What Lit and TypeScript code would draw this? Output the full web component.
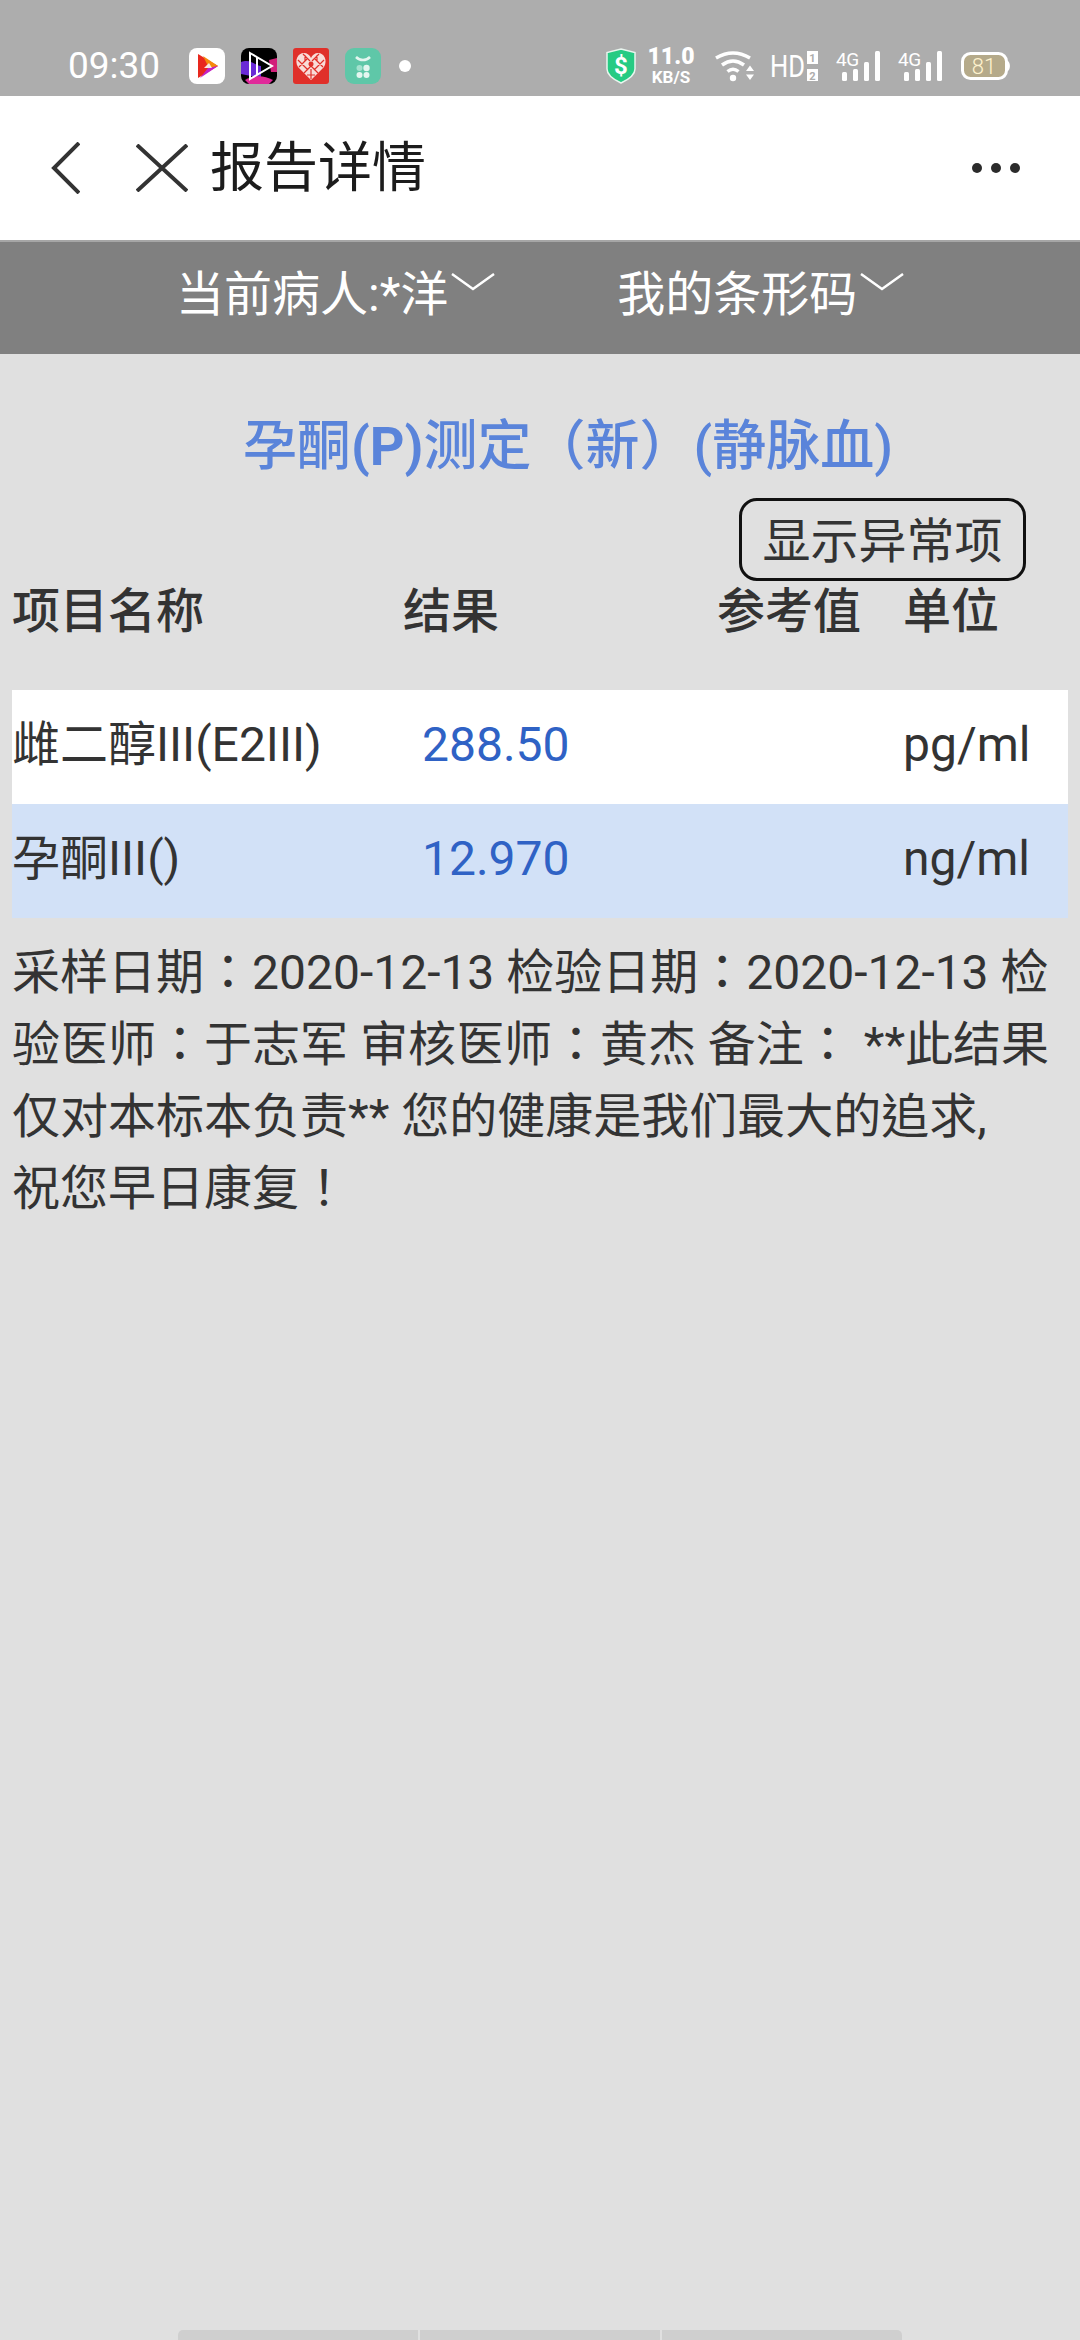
import { LitElement, html, css } from 'lit';
import { customElement } from 'lit/decorators.js';

const rows = [
  { name: '雌二醇III(E2III)', value: '288.50', unit: 'pg/ml', tint: false },
  { name: '孕酮III()', value: '12.970', unit: 'ng/ml', tint: true },
];

@customElement('app-root')
export class AppRoot extends LitElement {
  static styles = css`
    :host {
      display: block;
      width: 1080px;
      height: 2340px;
      overflow: hidden;
      position: relative;
      background: #e0e0e0;
      color: #333;
      font-family: 'Roboto', 'Noto Sans CJK SC', sans-serif;
    }
    svg {
      display: block;
      flex: none;
    }

    /* status bar */
    .status {
      height: 96px;
      background: #adadad;
      color: #fff;
      display: flex;
      align-items: center;
      padding: 36px 0 0 68px;
      box-sizing: border-box;
    }
    .time {
      font-size: 37px;
      width: 115px;
      margin-top: -1px;
    }
    .apps {
      display: flex;
      gap: 16px;
      margin-left: 6px;
      align-items: center;
    }
    .dot {
      width: 12px;
      height: 12px;
      border-radius: 50%;
      background: #fff;
      margin-left: 2px;
    }
    .sys {
      margin-left: auto;
      margin-right: 69px;
      display: flex;
      align-items: center;
    }
    .speed {
      display: flex;
      flex-direction: column;
      align-items: center;
      font-weight: 700;
      margin: 2px 21px 0 12px;
      width: 46px;
    }
    .speed b {
      font-size: 23px;
      line-height: 20px;
    }
    .speed span {
      font-size: 17px;
      line-height: 20px;
    }
    .wifi {
      margin-right: 16px;
    }
    .hd {
      margin-right: 18px;
    }
    .sig {
      width: 44px;
      height: 30px;
      margin-right: 18px;
      display: flex;
      align-items: flex-end;
    }
    .sig-left {
      width: 22px;
      display: flex;
      flex-direction: column;
    }
    .sig-left span {
      font-size: 19px;
      line-height: 18px;
      height: 18px;
      letter-spacing: -0.5px;
      white-space: nowrap;
    }
    .sig-bars {
      display: flex;
      align-items: flex-end;
      gap: 6px;
      padding-left: 6px;
      height: 12px;
    }
    .sig i {
      display: block;
      width: 5px;
      background: #fff;
      border-radius: 1.5px;
    }
    .sig > i {
      margin-left: 6px;
    }
    .battery {
      margin-left: 1px;
    }

    /* nav */
    .nav {
      height: 144px;
      box-sizing: border-box;
      background: #fff;
      display: flex;
      align-items: center;
      padding-left: 51px;
      color: #1c1c1c;
    }
    .close {
      margin-left: 56px;
    }
    .nav h1 {
      margin: 2px 0 0 22px;
      font-size: 54px;
      font-weight: 400;
      line-height: 60px;
    }
    .more {
      margin-left: auto;
      margin-right: 60px;
      display: flex;
      gap: 9px;
    }
    .more i {
      width: 10px;
      height: 10px;
      background: #2b2b2b;
      border-radius: 50%;
    }

    /* patient bar */
    .bar {
      height: 114px;
      box-sizing: border-box;
      background: #808080;
      border-top: 2px solid #a6a6a6;
      color: #fff;
      font-size: 48px;
      display: flex;
      padding: 22px 0 0 176px;
    }
    .pick {
      display: flex;
      align-items: flex-start;
      line-height: 62px;
    }
    .pick + .pick {
      margin-left: 122px;
    }
    .pick svg {
      margin: 9px 0 0 3px;
    }

    /* report */
    .title {
      margin: 0;
      padding: 60px 0 2px 56px;
      text-align: center;
      font-size: 54px;
      line-height: 66px;
      font-weight: 500;
      color: #5a84da;
    }
    .tools {
      display: flex;
      justify-content: flex-end;
      padding: 16px 54px 0 0;
    }
    .toggle {
      box-sizing: border-box;
      width: 287px;
      height: 83px;
      border: 3px solid #111;
      border-radius: 18px;
      background: none;
      color: #333;
      font: inherit;
      font-size: 48px;
      padding: 0 0 5px;
    }
    .table {
      margin: 0 12px;
    }
    .head {
      display: grid;
      grid-template-columns: 391px 314px 186px 1fr;
      height: 109px;
      font-size: 48px;
      font-weight: 500;
      line-height: 62px;
    }
    .row {
      display: grid;
      grid-template-columns: 410px 481px 1fr;
      align-items: center;
      box-sizing: border-box;
      height: 114px;
      padding-bottom: 5px;
      font-size: 48px;
      line-height: 60px;
      background: #fff;
    }
    .row.tint {
      background: #d2e1f7;
    }
    .row .val {
      color: #2f62c5;
    }
    .note {
      margin: 19px 12px 0;
      font-family: 'Roboto', 'Noto Sans CJK TC', sans-serif;
      font-size: 48px;
      line-height: 72px;
    }

    /* gesture handle */
    .handle {
      position: absolute;
      left: 178px;
      bottom: 0;
      width: 724px;
      height: 10px;
      display: flex;
      gap: 2px;
    }
    .handle i {
      flex: 1;
      background: #cfcfcf;
    }
    .handle i:first-child {
      border-radius: 5px 0 0 0;
    }
    .handle i:last-child {
      border-radius: 0 5px 0 0;
    }
  `;

  private renderApps() {
    return html`
      <div class="apps">
        <svg width="36" height="36" viewBox="0 0 36 36">
          <rect width="36" height="36" rx="8" fill="#fff" />
          <path d="M9 6 L29 18 L9 30 Z" fill="#e8281e" />
          <path d="M14 8 L29 18 L20 20 Z" fill="#f58a0c" />
          <path d="M11 30 L29 18 L19 20 Z" fill="#c222c8" />
          <path d="M15 20 L20 15 L23 20 Z" fill="#f8e8e0" />
        </svg>
        <svg width="36" height="36" viewBox="0 0 36 36">
          <rect width="36" height="36" rx="8" fill="#000" />
          <path d="M0 14 C10 10 14 18 20 18 L20 30 L0 26 Z" fill="#6a2ad6" />
          <path d="M4 32 C14 26 24 28 32 32 L28 36 L8 36 Z" fill="#e02a9a" />
          <path d="M28 12 L36 10 L36 24 L30 24 Z" fill="#d2207a" />
          <path d="M9 5 L31 18 L9 31 Z M16 9 V27 M9 5 L16 9 M9 31 L16 27" fill="none" stroke="#fff" stroke-width="2" />
        </svg>
        <svg width="36" height="36" viewBox="0 0 36 36">
          <rect width="36" height="36" rx="3" fill="#e0302a" />
          <path d="M18 32 L5 19 C1 12 5 5 11 5 C14 5 17 7 18 10 C19 7 22 5 25 5 C31 5 35 12 31 19 Z" fill="#f9dcd8" />
          <path d="M5 12 L15 22 M10 6 L17 13 M31 12 L21 22 M26 6 L19 13 M6 19 L14 11 M30 19 L22 11 M11 25 L18 18 M25 25 L18 18 M14 27 L22 27 M12 7 V13 M24 7 V13 M18 21 V31" stroke="#e0302a" stroke-width="1.2" fill="none" />
          <circle cx="18" cy="16" r="2.500" fill="#e0302a" />
        </svg>
        <svg width="36" height="36" viewBox="0 0 36 36">
          <rect width="36" height="36" rx="9" fill="#5fc7a8" />
          <path d="M11 9 C15 13 21 13 25 9" fill="none" stroke="#e4f6f0" stroke-width="2.500" />
          <circle cx="14.500" cy="20" r="3" fill="#a5e2cf" />
          <circle cx="21.500" cy="20" r="3.200" fill="#e4f6f0" />
          <circle cx="14.500" cy="27" r="3" fill="#e4f6f0" />
          <circle cx="21.500" cy="27" r="3" fill="#e4f6f0" />
        </svg>
        <span class="dot"></span>
      </div>
    `;
  }

  private renderSignal() {
    return html`
      <div class="sig">
        <div class="sig-left">
          <span>4G</span>
          <div class="sig-bars">
            <i style="height:9px"></i>
            <i style="height:12px"></i>
          </div>
        </div>
        <i style="height:19px"></i>
        <i style="height:30px"></i>
      </div>
    `;
  }

  private renderSys() {
    return html`
      <div class="sys">
        <svg width="30" height="36" viewBox="0 0 30 36">
          <path d="M15 1 L29 4.500 V21 C29 27 21.500 32 15 35 C8.500 32 1 27 1 21 V4.500 Z" fill="#26cb83" stroke="#e8f5ee" stroke-width="1.500" />
          <text x="15" y="26" text-anchor="middle" font-size="24" font-weight="700" font-family="Roboto, sans-serif" fill="#fff">$</text>
        </svg>
        <div class="speed"><b>11.0</b><span>KB/S</span></div>
        <svg class="wifi" width="39" height="31" viewBox="0 0 39 31">
          <path d="M1 7 Q18 -3 35 7" fill="none" stroke="#fff" stroke-width="3.500" />
          <path d="M7 14 Q18 6 29 14" fill="none" stroke="#fff" stroke-width="3.500" />
          <path d="M12.500 20.500 Q18 16 23.500 20.500" fill="none" stroke="#fff" stroke-width="3.500" />
          <circle cx="18" cy="27" r="3.200" fill="#fff" />
          <path d="M31 20 L35 14.500 L39 20 Z M31 23.500 L35 29 L39 23.500 Z" fill="#fff" />
        </svg>
        <svg class="hd" width="48" height="38" viewBox="0 0 48 38">
          <text x="0" y="30" font-size="32" font-family="Roboto, sans-serif" fill="#fff" textLength="35" lengthAdjust="spacingAndGlyphs">HD</text>
          <rect x="37" y="4" width="11" height="13" fill="#fff" />
          <rect x="37" y="22" width="11" height="12" fill="#fff" />
          <text x="42.500" y="15" text-anchor="middle" font-size="11" font-weight="700" font-family="Roboto, sans-serif" fill="#adadad">1</text>
          <text x="42.500" y="32.500" text-anchor="middle" font-size="11" font-weight="700" font-family="Roboto, sans-serif" fill="#adadad">2</text>
        </svg>
        ${this.renderSignal()} ${this.renderSignal()}
        <svg class="battery" width="50" height="28" viewBox="0 0 50 28">
          <rect x="1.500" y="1.500" width="44" height="25" rx="8" fill="#b5aa8a" stroke="#fff" stroke-width="3" />
          <path d="M47 9 C49.500 11 49.500 17 47 19 Z" fill="#fff" />
          <text x="23" y="21.500" text-anchor="middle" font-size="22" font-weight="300" font-family="Roboto, sans-serif" fill="#fff3cf">81</text>
        </svg>
      </div>
    `;
  }

  private chevron() {
    return html`
      <svg width="44" height="18" viewBox="0 0 44 18">
        <path d="M1 1 L22 16 L43 1" fill="none" stroke="#fff" stroke-width="2.500" />
      </svg>
    `;
  }

  render() {
    return html`
      <div class="status">
        <span class="time">09:30</span>
        ${this.renderApps()} ${this.renderSys()}
      </div>

      <div class="nav">
        <svg width="29" height="52" viewBox="0 0 29 52">
          <path d="M28 1 L3 26 L28 51" fill="none" stroke="#333" stroke-width="4" />
        </svg>
        <svg class="close" width="52" height="48" viewBox="0 0 52 48">
          <path d="M1 1 L51 47 M51 1 L1 47" fill="none" stroke="#333" stroke-width="4" />
        </svg>
        <h1>报告详情</h1>
        <div class="more"><i></i><i></i><i></i></div>
      </div>

      <div class="bar">
        <div class="pick">当前病人:*洋${this.chevron()}</div>
        <div class="pick">我的条形码${this.chevron()}</div>
      </div>

      <h2 class="title">孕酮<b>(P)</b>测定（新）(静脉血)</h2>
      <div class="tools"><button class="toggle">显示异常项</button></div>

      <div class="table">
        <div class="head">
          <div>项目名称</div>
          <div>结果</div>
          <div>参考值</div>
          <div>单位</div>
        </div>
        ${rows.map(
          (r) => html`
            <div class="row ${r.tint ? 'tint' : ''}">
              <div>${r.name}</div>
              <div class="val">${r.value}</div>
              <div>${r.unit}</div>
            </div>
          `,
        )}
      </div>

      <p class="note">
        采样日期：2020-12-13 检验日期：2020-12-13 检验医师：于志军 审核医师：黄杰 备注： **此结果仅对本标本负责** 您的健康是我们最大的追求,<br />祝您早日康复！
      </p>

      <div class="handle"><i></i><i></i><i></i></div>
    `;
  }
}
